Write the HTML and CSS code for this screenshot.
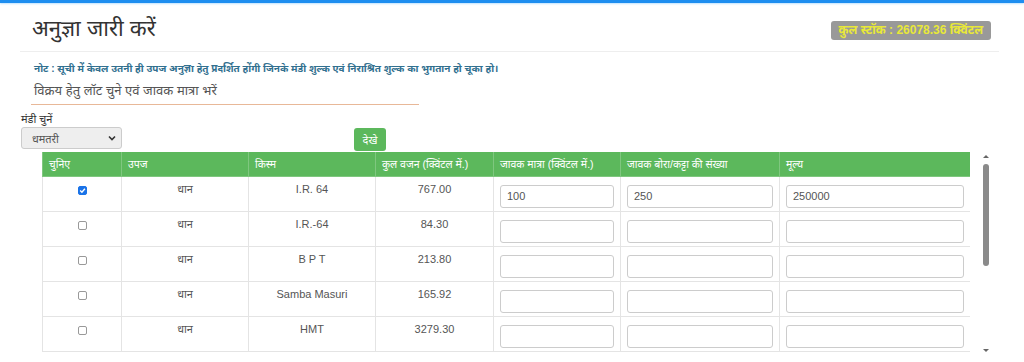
FILE: index.html
```html
<!DOCTYPE html>
<html lang="hi">
<head>
<meta charset="utf-8">
<title>अनुज्ञा जारी करें</title>
<link rel="stylesheet" href="styles.css">
</head>
<body>
<div class="topbar"></div>
<div class="page">
  <div class="head">
    <h1 class="title">अनुज्ञा जारी करें</h1>
    <span class="stock">कुल स्टॉक : 26078.36 क्विंटल</span>
  </div>
  <p class="note">नोट : सूची में केवल उतनी ही उपज अनुज्ञा हेतु प्रदर्शित होंगी जिनके मंडी शुल्क एवं निराश्रित शुल्क का भुगतान हो चूका हो।</p>
  <h2 class="sub">विक्रय हेतु लॉट चुने एवं जावक मात्रा भरें</h2>
  <label class="lbl">मंडी चुनें</label>
  <div class="filter">
    <div class="select"><span>धमतरी</span><svg width="8" height="6" viewBox="0 0 8 6"><path d="M1 1.5 L4 4.5 L7 1.5" fill="none" stroke="#333" stroke-width="1.6"/></svg></div>
    <button class="btn">देखे</button>
  </div>
  <div class="grid-wrap">
    <div class="scroller">
      <table class="grid">
        <colgroup>
          <col class="c1"><col class="c2"><col class="c3"><col class="c4"><col class="c5"><col class="c6"><col class="c7">
        </colgroup>
        <thead>
          <tr><th>चुनिए</th><th>उपज</th><th>किस्म</th><th>कुल वजन (क्विंटल में.)</th><th>जावक मात्रा (क्विंटल में.)</th><th>जावक बोरा/कट्टा की संख्या</th><th>मूल्य</th></tr>
        </thead>
        <tbody>
          <tr><td><span class="cb on"><svg width="7" height="7" viewBox="0 0 7 7"><path d="M1.2 3.6 L2.9 5.2 L5.9 1.8" fill="none" stroke="#fff" stroke-width="1.4"/></svg></span></td><td>धान</td><td>I.R. 64</td><td>767.00</td><td><div class="inp">100</div></td><td><div class="inp">250</div></td><td><div class="inp">250000</div></td></tr>
          <tr><td><span class="cb"></span></td><td>धान</td><td>I.R.-64</td><td>84.30</td><td><div class="inp"></div></td><td><div class="inp"></div></td><td><div class="inp"></div></td></tr>
          <tr><td><span class="cb"></span></td><td>धान</td><td>B P T</td><td>213.80</td><td><div class="inp"></div></td><td><div class="inp"></div></td><td><div class="inp"></div></td></tr>
          <tr><td><span class="cb"></span></td><td>धान</td><td>Samba Masuri</td><td>165.92</td><td><div class="inp"></div></td><td><div class="inp"></div></td><td><div class="inp"></div></td></tr>
          <tr><td><span class="cb"></span></td><td>धान</td><td>HMT</td><td>3279.30</td><td><div class="inp"></div></td><td><div class="inp"></div></td><td><div class="inp"></div></td></tr>
          <tr class="tail"><td></td><td></td><td></td><td></td><td></td><td></td><td></td></tr>
        </tbody>
      </table>
    </div>
    <div class="sbar">
      <span class="arr up"></span>
      <div class="track"><div class="thumb"></div></div>
      <span class="arr down"></span>
    </div>
  </div>
</div>
</body>
</html>
```
FILE: styles.css
```css
html, body {
  margin: 0;
  padding: 0;
  background: #fff;
}
body {
  font-family: "Liberation Sans", Arial, "Noto Sans", sans-serif;
  color: #333;
  height: 362px;
  overflow: hidden;
}
.topbar {
  height: 3px;
  background: #1e8ef0;
  box-shadow: 0 1px 2px #bfe3ff;
}
.page {
  padding: 0 0 0 21px;
}
.head {
  display: flex;
  align-items: flex-start;
  justify-content: space-between;
  width: 979px;
  margin-left: -1px;
  border-bottom: 1px solid #eee;
  height: 48px;
}
.title {
  margin: 12px 0 0 12px;
  font-size: 22px;
  font-weight: normal;
  color: #333;
  line-height: 28px;
}
.stock {
  margin: 18px 8px 0 0;
  background: #999;
  color: #e8e838;
  font-weight: bold;
  font-size: 12px;
  line-height: 19px;
  padding: 0 8px;
  border-radius: 3px;
}
.note {
  margin: 10px 0 0 13px;
  font-size: 10px;
  font-weight: bold;
  color: #31708f;
  line-height: 14px;
}
.sub {
  margin: 5px 0 0 10px;
  width: 385px;
  padding: 0 0 4px 3px;
  font-size: 13px;
  font-weight: normal;
  color: #555;
  line-height: 19px;
  border-bottom: 1px solid #e8b898;
}
.lbl {
  display: block;
  margin-top: 7px;
  font-size: 11px;
  color: #333;
  line-height: 14px;
}
.filter {
  display: flex;
  align-items: flex-start;
  gap: 232px;
  margin-top: 1px;
}
.select {
  width: 101px;
  height: 22px;
  box-sizing: border-box;
  border: 1px solid #ccc;
  border-radius: 3px;
  background: #eee;
  display: flex;
  align-items: center;
  justify-content: space-between;
  padding: 0 5px 0 10px;
  font-size: 11px;
  color: #555;
}
.btn {
  margin-top: 1px;
  width: 32px;
  height: 23px;
  border: none;
  border-radius: 3px;
  background: #5cb85c;
  color: #fff;
  font-size: 11px;
  font-family: inherit;
  padding: 0;
}
.grid-wrap {
  display: flex;
  margin: 1px 0 0 21px;
  height: 200px;
}
.scroller {
  width: 928px;
  overflow: hidden;
}
.grid {
  border-collapse: collapse;
  table-layout: fixed;
  width: 928px;
  font-size: 11px;
}
.c1 { width: 79px; }
.c2 { width: 127px; }
.c3 { width: 127px; }
.c4 { width: 118px; }
.c5 { width: 127px; }
.c6 { width: 159px; }
.c7 { width: 191px; }
.grid th {
  background: #5cb85c;
  color: #fff;
  font-weight: normal;
  font-size: 10.5px;
  text-align: left;
  height: 24px;
  padding: 0 6px;
  border: 1px solid #7fc77f;
  border-top: none;
  box-sizing: border-box;
}
.grid td {
  height: 35px;
  box-sizing: border-box;
  border: 1px solid #e4e4e4;
  text-align: center;
  vertical-align: top;
  padding: 6px 6px 0;
  color: #555;
  line-height: 13px;
}
.cb {
  display: inline-block;
  width: 7px;
  height: 7px;
  border: 1px solid #999;
  border-radius: 2px;
  margin-top: 3px;
  background: #fff;
  vertical-align: top;
}
.cb.on {
  background: #1a73e8;
  border-color: #1a73e8;
}
.cb.on svg {
  display: block;
}
.inp {
  height: 23px;
  box-sizing: border-box;
  border: 1px solid #ccc;
  border-radius: 3px;
  background: #fff;
  text-align: left;
  padding: 0 6px;
  line-height: 21px;
  color: #555;
  margin-top: 1px;
}
.grid td:nth-child(n+5) {
  padding-top: 7px;
}
.sbar {
  margin-left: 11px;
  width: 10px;
  display: flex;
  flex-direction: column;
  align-items: center;
  padding-top: 3px;
}
.arr {
  width: 0;
  height: 0;
  border-left: 3px solid transparent;
  border-right: 3px solid transparent;
}
.arr.up {
  border-bottom: 3px solid #666;
}
.arr.down {
  border-top: 3px solid #666;
}
.track {
  flex: 1;
  width: 10px;
  display: flex;
  justify-content: center;
}
.thumb {
  margin-top: 6px;
  width: 6px;
  height: 102px;
  border-radius: 3px;
  background: #8a8a8a;
}
```
